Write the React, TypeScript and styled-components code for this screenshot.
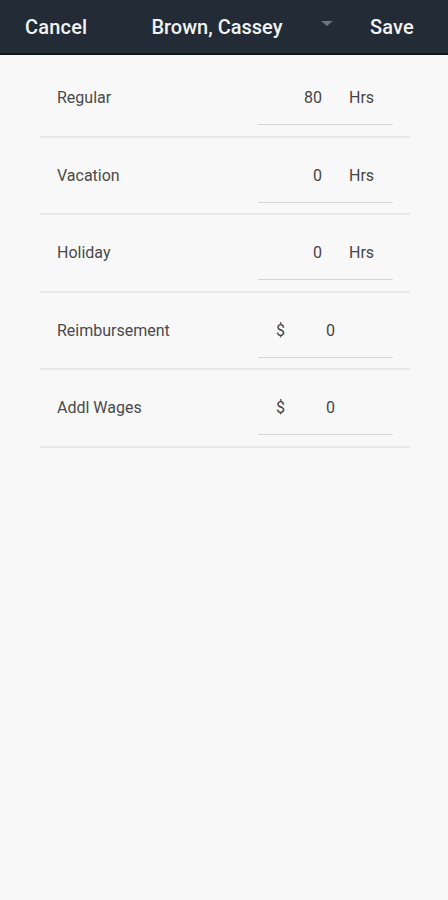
import styled, { createGlobalStyle } from "styled-components";

const GlobalStyle = createGlobalStyle`
  html, body {
    margin: 0;
    padding: 0;
    background: #f8f8f8;
  }
  body {
    font-family: Roboto, "Noto Sans", "Liberation Sans", sans-serif;
    -webkit-font-smoothing: antialiased;
  }
`;

const Screen = styled.div`
  width: 448px;
  min-height: 900px;
  background: #f8f8f8;
  display: flex;
  flex-direction: column;
`;

const Header = styled.header`
  height: 53px;
  background: #222b36;
  border-bottom: 2px solid #10151b;
  display: flex;
  align-items: center;
  padding: 0 34px 0 25px;
  color: #f2f3f4;
  font-size: 20px;
  font-weight: 500;
`;

const HeaderButton = styled.span`
  letter-spacing: 0.2px;
`;

const Title = styled.span`
  margin-left: 64px;
`;

const Caret = styled.span`
  width: 0;
  height: 0;
  margin-left: 39px;
  margin-top: -6px;
  border-left: 6px solid transparent;
  border-right: 6px solid transparent;
  border-top: 5px solid #6c747e;
`;

const SaveButton = styled(HeaderButton)`
  margin-left: auto;
`;

const List = styled.div`
  margin: 5px 38px 0 40px;
`;

const Row = styled.div`
  border-bottom: 2px solid #e8e8e8;
  display: flex;
  align-items: flex-start;
  padding: 26px 0 0 17px;
  height: 49.5px;
`;

const Label = styled.span`
  flex: 0 0 201px;
  font-size: 16px;
  line-height: 24px;
  color: #4a4a4a;
`;

const InputBox = styled.div`
  width: 135px;
  height: 38px;
  border-bottom: 1px solid #d6d6d6;
  display: flex;
  align-items: flex-start;
  font-size: 16px;
  line-height: 24px;
  color: #454545;
`;

const HoursValue = styled.span`
  width: 64px;
  text-align: right;
`;

const Unit = styled.span`
  margin-left: 27px;
`;

const Prefix = styled.span`
  margin-left: 18px;
  width: 50px;
`;

type Entry = { label: string; value: string; kind: "hours" | "money" };

const entries: Entry[] = [
  { label: "Regular", value: "80", kind: "hours" },
  { label: "Vacation", value: "0", kind: "hours" },
  { label: "Holiday", value: "0", kind: "hours" },
  { label: "Reimbursement", value: "0", kind: "money" },
  { label: "Addl Wages", value: "0", kind: "money" },
];

export default function App() {
  return (
    <Screen>
      <GlobalStyle />
      <Header>
        <HeaderButton>Cancel</HeaderButton>
        <Title>Brown, Cassey</Title>
        <Caret />
        <SaveButton>Save</SaveButton>
      </Header>
      <List>
        {entries.map((e) => (
          <Row key={e.label}>
            <Label>{e.label}</Label>
            <InputBox>
              {e.kind === "hours" ? (
                <>
                  <HoursValue>{e.value}</HoursValue>
                  <Unit>Hrs</Unit>
                </>
              ) : (
                <>
                  <Prefix>$</Prefix>
                  <span>{e.value}</span>
                </>
              )}
            </InputBox>
          </Row>
        ))}
      </List>
    </Screen>
  );
}
